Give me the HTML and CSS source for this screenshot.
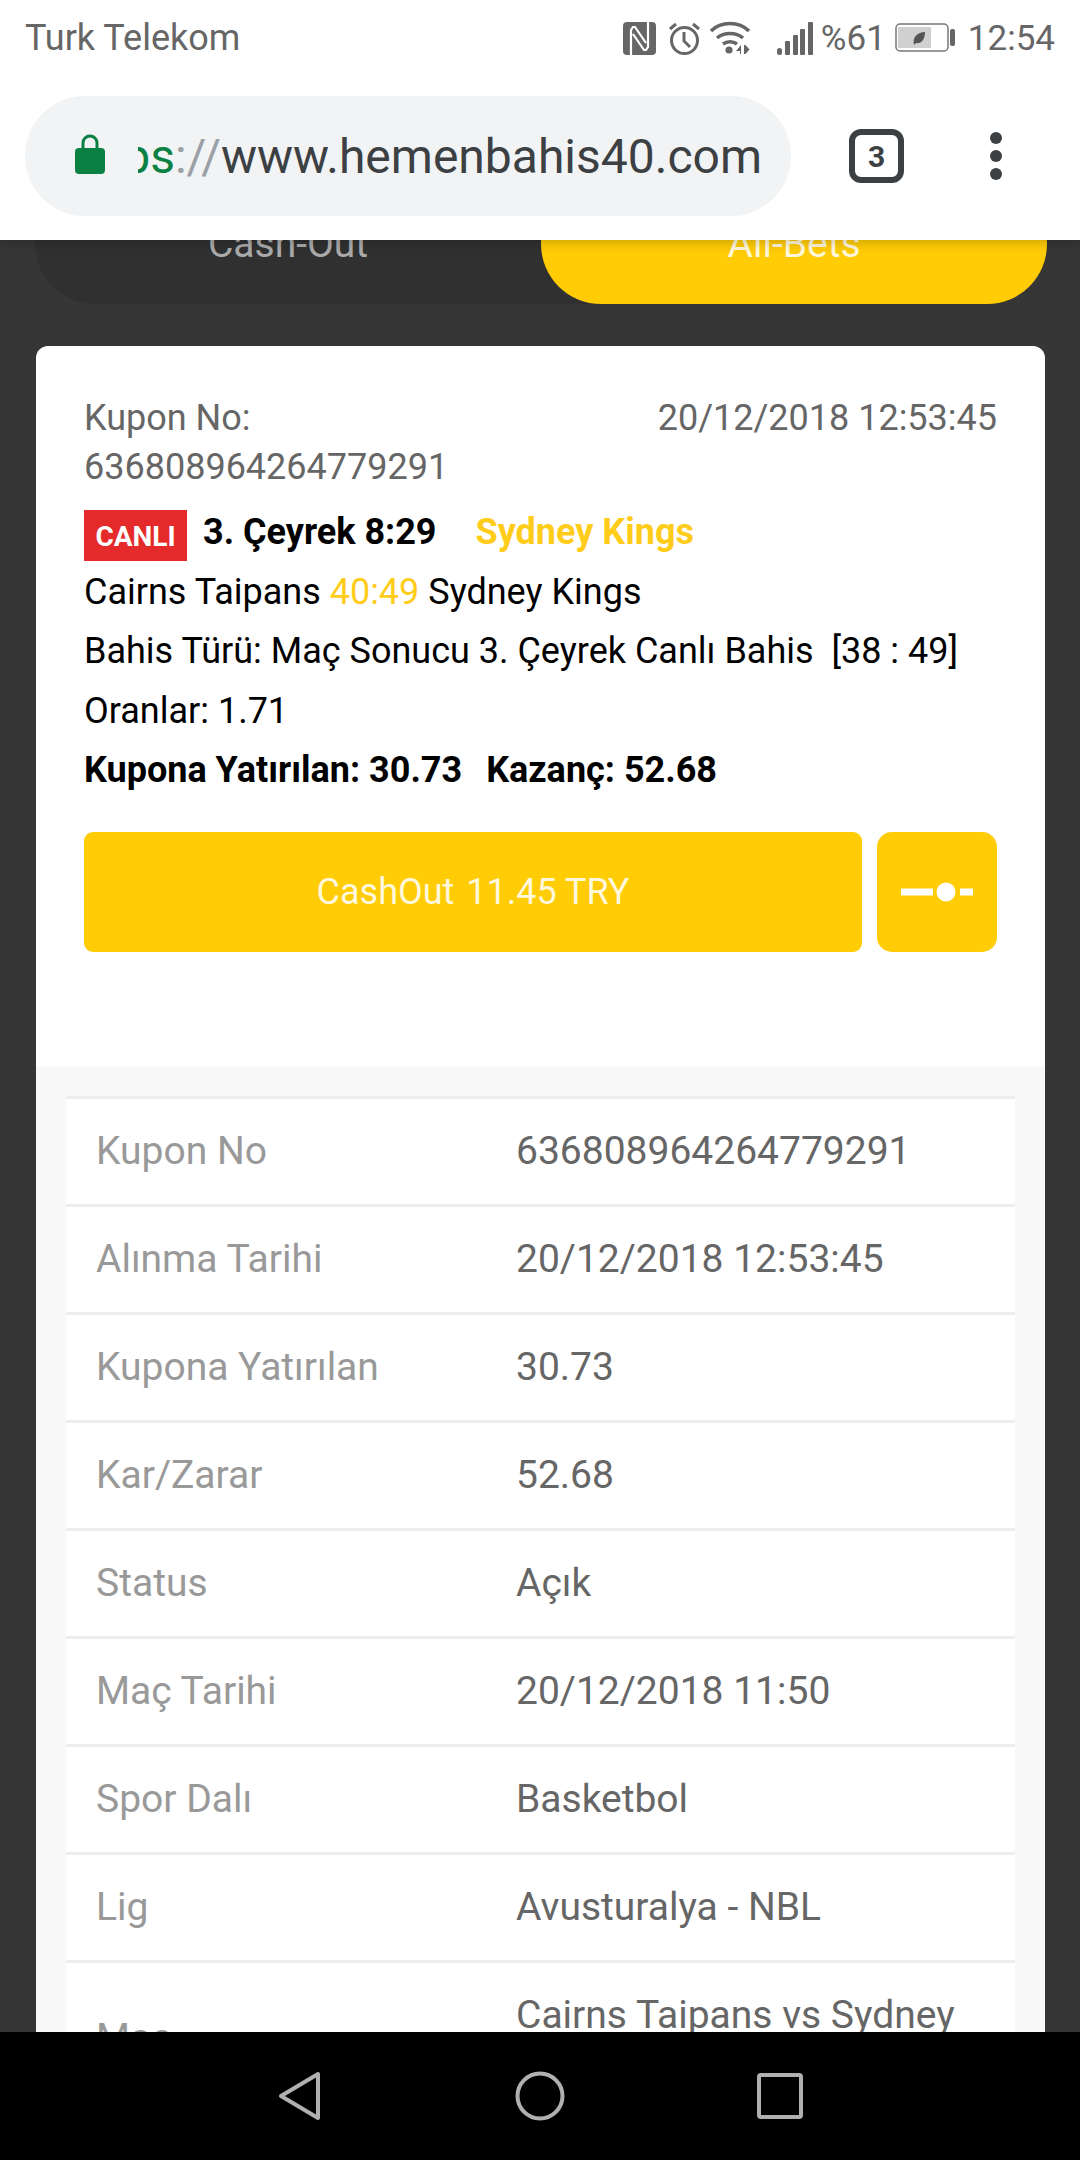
FILE: index.html
```html
<!DOCTYPE html>
<html lang="tr">
  <head>
    <meta charset="UTF-8" />
    <title>Kupon</title>
    <link rel="stylesheet" href="styles.css">
  </head>
  <body>
    <div class="screen">
      <header class="chrome">
        <div class="status-bar">
          <span class="carrier">Turk Telekom</span>
          <div class="status-icons">
            <svg class="icon-nfc" width="33" height="33" viewBox="0 0 33 33">
              <rect width="33" height="33" rx="4" fill="#666"/>
              <path d="M8 33V8l2-3h2l11 16M25 0v25l-2 3h-2L10 12" fill="none" stroke="#fff" stroke-width="2.200"/>
            </svg>
            <svg class="icon-alarm" width="33" height="33" viewBox="0 0 33 33">
              <circle cx="16.500" cy="18.500" r="13" fill="none" stroke="#666" stroke-width="3"/>
              <path d="M16 10v9l6 6" fill="none" stroke="#666" stroke-width="3"/>
              <path d="M2 7l6-5M31 7l-6-5" fill="none" stroke="#666" stroke-width="3"/>
            </svg>
            <svg class="icon-wifi" width="41" height="34" viewBox="0 0 41 34">
              <path d="M1 10C11 0 29 0 39 10M7 17c7-6 19-6 26 0M13 23c4-3 10-3 14 0" fill="none" stroke="#666" stroke-width="3.500"/>
              <circle cx="19" cy="29" r="3.600" fill="#666"/>
              <path d="M26 30l5-6v9h-1v-3zM34 24v9h1.500l4-4.500-4-4.500z" fill="#666"/>
            </svg>
            <svg class="icon-signal" width="36" height="33" viewBox="0 0 36 33">
              <rect x="0" y="26" width="5" height="7" rx="2.500" fill="#666"/>
              <rect x="8" y="19" width="5" height="14" rx="1" fill="#666"/>
              <rect x="16" y="13" width="5" height="20" rx="1" fill="#666"/>
              <rect x="23" y="7" width="5" height="26" rx="1" fill="#666"/>
              <rect x="31" y="0" width="5" height="33" rx="1" fill="#666"/>
            </svg>
            <span class="battery-text">%61</span>
            <svg class="icon-battery" width="60" height="30" viewBox="0 0 60 30">
              <rect x="1" y="1" width="52" height="27" rx="4" fill="none" stroke="#777" stroke-width="1.500"/>
              <rect x="3" y="4" width="33" height="21" fill="#d0d0d0"/>
              <path d="M19 22c-2-8 4-13 11-13 0 8-4 12-9 11z" fill="#555"/>
              <rect x="55" y="6" width="5" height="17" rx="2" fill="#666"/>
            </svg>
            <span class="clock">12:54</span>
          </div>
        </div>
        <div class="toolbar">
          <div class="address-pill">
            <svg class="lock" width="30" height="40" viewBox="0 0 30 40">
              <path d="M8 16V9a7 7 0 0 1 14 0v7" fill="none" stroke="#0b8043" stroke-width="3"/>
              <rect y="14" width="30" height="26" rx="4" fill="#0b8043"/>
            </svg>
            <div class="url"><span class="url-inner"><span class="url-green">https</span><span class="url-grey">://</span>www.hemenbahis40.com</span></div>
          </div>
          <div class="tab-count">3</div>
          <div class="menu-dots"><i></i><i></i><i></i></div>
        </div>
      </header>

      <main class="page">
        <div class="tabs">
          <div class="tab">Cash-Out</div>
          <div class="tab tab-active">All-Bets</div>
        </div>

        <section class="card">
          <div class="card-top">
            <div class="coupon-head">
              <div class="coupon-no">Kupon No:<br>636808964264779291</div>
              <div class="coupon-date">20/12/2018 12:53:45</div>
            </div>
            <div class="line live-line">
              <span class="live-badge">CANLI</span>
              <strong class="period">3. Çeyrek 8:29</strong>
              <strong class="yellow">Sydney Kings</strong>
            </div>
            <div class="line">Cairns Taipans <span class="yellow">40:49</span> Sydney Kings</div>
            <div class="line">Bahis Türü: Maç Sonucu 3. Çeyrek Canlı Bahis&nbsp; [38 : 49]</div>
            <div class="line">Oranlar: 1.71</div>
            <div class="line"><strong>Kupona Yatırılan: 30.73<span class="win">Kazanç: 52.68</span></strong></div>
            <div class="actions">
              <button class="btn-cashout">CashOut<span class="amount">11.45 TRY</span></button>
              <button class="btn-slider">
                <svg width="72" height="20" viewBox="0 0 72 20">
                  <rect x="0" y="6.500" width="32" height="7" fill="#fff"/>
                  <circle cx="45" cy="10" r="9.500" fill="#fff"/>
                  <rect x="59" y="6.500" width="13" height="7" fill="#fff"/>
                </svg>
              </button>
            </div>
          </div>

          <div class="details">
            <div class="detail-table">
              <div class="row"><div class="label">Kupon No</div><div class="value">636808964264779291</div></div>
              <div class="row"><div class="label">Alınma Tarihi</div><div class="value">20/12/2018 12:53:45</div></div>
              <div class="row"><div class="label">Kupona Yatırılan</div><div class="value">30.73</div></div>
              <div class="row"><div class="label">Kar/Zarar</div><div class="value">52.68</div></div>
              <div class="row"><div class="label">Status</div><div class="value">Açık</div></div>
              <div class="row"><div class="label">Maç Tarihi</div><div class="value">20/12/2018 11:50</div></div>
              <div class="row"><div class="label">Spor Dalı</div><div class="value">Basketbol</div></div>
              <div class="row"><div class="label">Lig</div><div class="value">Avusturalya - NBL</div></div>
              <div class="row"><div class="label">Maç</div><div class="value">Cairns Taipans vs Sydney Kings</div></div>
            </div>
          </div>
        </section>
      </main>

      <nav class="nav-bar">
        <div class="nav-item">
          <svg width="44" height="50" viewBox="0 0 44 50"><path d="M40 3v44L3 25z" fill="none" stroke="#b0b0b0" stroke-width="4" stroke-linejoin="round"/></svg>
        </div>
        <div class="nav-item">
          <svg width="50" height="50" viewBox="0 0 50 50"><circle cx="25" cy="25" r="22.500" fill="none" stroke="#b0b0b0" stroke-width="4"/></svg>
        </div>
        <div class="nav-item">
          <svg width="46" height="46" viewBox="0 0 46 46"><rect x="2" y="2" width="42" height="42" rx="2" fill="none" stroke="#b0b0b0" stroke-width="4"/></svg>
        </div>
      </nav>
    </div>
  </body>
</html>
```

FILE: styles.css
```css
* {
  box-sizing: border-box;
}
body {
  margin: 0;
  font-family: Roboto, "Liberation Sans", sans-serif;
  background: #363636;
}
.screen {
  display: flex;
  flex-direction: column;
  width: 1080px;
  height: 2160px;
  overflow: hidden;
}

/* browser chrome */
.chrome {
  position: relative;
  z-index: 2;
  flex: none;
  height: 240px;
  background: #fff;
  box-shadow: 0 2px 12px rgba(0, 0, 0, 0.22);
}
.status-bar {
  display: flex;
  justify-content: space-between;
  align-items: center;
  height: 72px;
  padding: 4px 25px 0;
  color: #666;
  font-size: 35px;
}
.carrier {
  font-size: 36px;
}
.status-icons {
  display: flex;
  align-items: center;
}
.status-icons svg {
  display: block;
}
.icon-alarm {
  margin-left: 12px;
}
.icon-wifi {
  margin-left: 9px;
}
.icon-signal {
  margin-left: 26px;
}
.battery-text {
  margin-left: 8px;
}
.icon-battery {
  margin-left: 9px;
}
.clock {
  margin-left: 13px;
}
.toolbar {
  display: flex;
  align-items: center;
  height: 168px;
  padding: 24px 0 24px 25px;
}
.address-pill {
  display: flex;
  align-items: center;
  width: 766px;
  height: 120px;
  padding-left: 50px;
  border-radius: 60px;
  background: #f1f3f4;
}
.lock {
  flex: none;
  margin-top: -4px;
}
.url {
  display: flex;
  justify-content: flex-end;
  width: 624px;
  margin-left: 33px;
  overflow: hidden;
  white-space: nowrap;
  color: #3c4043;
  font-size: 48px;
}
.url-inner {
  flex: none;
}
.url-green {
  color: #0b8043;
}
.url-grey {
  color: #9aa0a6;
}
.tab-count {
  display: flex;
  justify-content: center;
  align-items: center;
  width: 55px;
  height: 54px;
  margin-left: 58px;
  border: 6px solid #3c4043;
  border-radius: 12px;
  color: #3c4043;
  font-size: 30px;
  font-weight: 700;
}
.menu-dots {
  display: flex;
  flex-direction: column;
  gap: 6px;
  margin-left: 86px;
}
.menu-dots i {
  display: block;
  width: 12px;
  height: 12px;
  border-radius: 50%;
  background: #3c4043;
}

/* page */
.page {
  flex: 1;
  min-height: 0;
  padding: 0 35px;
  overflow: hidden;
}
.tabs {
  display: flex;
  width: 1012px;
  height: 120px;
  margin-top: -56px;
  border-radius: 60px;
  background: #303030;
}
.tab {
  display: flex;
  flex: 1;
  justify-content: center;
  align-items: center;
  color: #aaa;
  font-size: 39px;
}
.tab-active {
  border-radius: 60px;
  background: #ffcc05;
  color: #fff8dc;
}
.card {
  width: 1009px;
  margin: 42px 0 0 1px;
  border-radius: 12px 12px 0 0;
  background: #fff;
}
.card-top {
  height: 720px;
  padding: 48px 48px 0;
  color: #000;
  font-size: 36px;
}
.coupon-head {
  display: flex;
  justify-content: space-between;
  margin-bottom: 11px;
  color: #666;
  line-height: 49px;
}
.line {
  height: 59.500px;
  line-height: 59.500px;
  white-space: nowrap;
}
.live-line {
  display: flex;
  align-items: center;
}
.live-badge {
  align-self: flex-start;
  width: 103px;
  height: 51px;
  margin-top: 7px;
  margin-right: 16px;
  background: #e42a2a;
  color: #fff;
  font-size: 28px;
  font-weight: 700;
  line-height: 53px;
  text-align: center;
}
.period {
  margin-right: 39px;
}
.yellow {
  color: #ffcc1a;
}
.win {
  margin-left: 24px;
}
.actions {
  display: flex;
  gap: 15px;
  margin-top: 31.500px;
}
.actions button {
  height: 120px;
  padding: 0;
  border: 0;
  background: #ffcc05;
  color: #fff8dc;
  font-family: inherit;
  font-size: 36px;
}
.amount {
  margin-left: 12px;
}
.btn-cashout {
  width: 778px;
  border-radius: 9px;
}
.btn-slider {
  display: flex;
  justify-content: center;
  align-items: center;
  width: 120px;
  border-radius: 15px;
}

/* detail table */
.details {
  height: 1000px;
  padding: 30px;
  background: #f9f9f9;
}
.detail-table {
  background: #fff;
  font-size: 39px;
  line-height: 45px;
}
.row {
  display: flex;
  align-items: center;
  border-top: 3px solid #eee;
  padding: 30px;
}
.label {
  flex: none;
  width: 420px;
  color: #999;
}
.value {
  width: 440px;
  color: #666;
}

/* android nav */
.nav-bar {
  position: relative;
  z-index: 2;
  display: flex;
  flex: none;
  justify-content: center;
  align-items: center;
  height: 128px;
  background: #000;
}
.nav-item {
  display: flex;
  justify-content: center;
  width: 240px;
}
```
